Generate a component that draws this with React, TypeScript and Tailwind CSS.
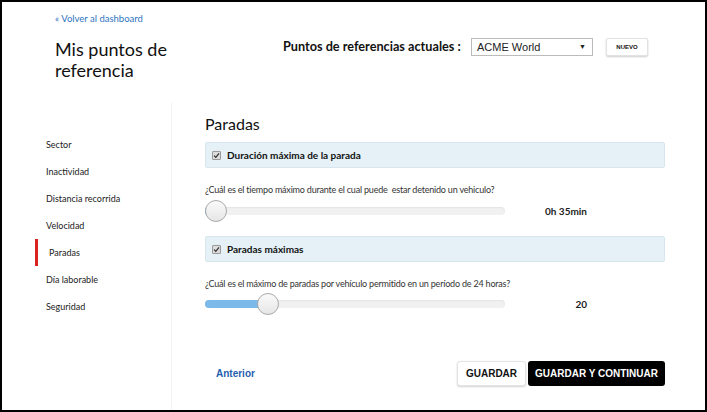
import { useState } from 'react';

const SECTIONS = ['Sector', 'Inactividad', 'Distancia recorrida', 'Velocidad', 'Paradas', 'Día laborable', 'Seguridad'];

function Check() {
  return (
    <span className="flex h-[9px] w-[9px] items-center justify-center rounded-[1px] border border-[#9a9a9a] bg-[#dcdcdc]">
      <svg viewBox="0 0 10 10" className="h-[7px] w-[7px]">
        <path d="M1.5 5.2 L4 7.6 L8.6 2" fill="none" stroke="#333" strokeWidth="1.8" />
      </svg>
    </span>
  );
}

function Slider({ pct, value }: { pct: number; value: string }) {
  return (
    <div className="flex h-[22px] items-center">
      <div className="relative h-[22px] w-[300px]">
        <div className="absolute left-0 right-0 top-[7px] h-[8px] rounded-[4px] bg-[#f1f1f1] shadow-[inset_0_1px_2px_rgba(0,0,0,0.06)]" />
        <div
          className="absolute left-0 top-[7px] h-[8px] rounded-l-[4px] bg-[#7db9e8]"
          style={{ width: `${Math.max(pct * 300, 3)}px` }}
        />
        <div
          className="absolute top-0 h-[22px] w-[22px] rounded-full border border-[#aaa] bg-gradient-to-b from-[#fafafa] to-[#e6e6e6]"
          style={{ left: `${pct * 300 - (pct > 0 ? 11 : 0)}px` }}
        />
      </div>
      <span className="w-[82px] text-right text-[10px] font-bold text-[#222]">{value}</span>
    </div>
  );
}

export default function App() {
  const [active] = useState('Paradas');

  return (
    <div className="flex h-[412px] w-[707px] flex-col overflow-hidden border-2 border-black bg-white font-['Lato',sans-serif] text-[#222]">
      {/* header */}
      <header className="flex h-[101px] shrink-0 pl-[53px] pt-[11px]">
        <div className="w-[228px]">
          <a className="block text-[9.5px] leading-[12px] text-[#2f74c0]">« Volver al dashboard</a>
          <h1 className="mt-[14px] text-[18px] leading-[21px] text-[#111]">
            Mis puntos de
            <br />
            referencia
          </h1>
        </div>
        <div className="mt-[25px] flex h-[18px] items-center">
          <span className="w-[179px] whitespace-nowrap text-[12.7px] font-bold text-[#111]">Puntos de referencias actuales :</span>
          <div className="ml-[9px] flex h-[18px] w-[122px] items-center justify-between border border-[#bbb] bg-white pl-[5px] pr-[6px] font-['Liberation_Sans',sans-serif] text-[11px] text-[#222]">
            <span>ACME World</span>
            <span className="text-[7px]">▼</span>
          </div>
          <button className="ml-[13px] h-[18px] w-[42px] rounded-[2px] border border-[#e2e2e2] bg-white font-['Liberation_Sans',sans-serif] text-[6px] font-bold text-[#111] shadow-[0_1px_2px_rgba(0,0,0,0.2)]">
            NUEVO
          </button>
        </div>
      </header>

      <div className="flex flex-1">
        {/* sidebar */}
        <nav className="w-[169px] shrink-0 pl-[33px] pt-[28px]">
          {SECTIONS.map((s) =>
            s === active ? (
              <div key={s} className="flex h-[27px] items-center border-l-[3px] border-[#d9231d] pl-[11px] text-[9px]">
                {s}
              </div>
            ) : (
              <div key={s} className="flex h-[27px] items-center pl-[11px] text-[9px]">
                {s}
              </div>
            ),
          )}
        </nav>

        {/* content */}
        <main className="flex flex-1 flex-col border-l border-[#f3f3f3] pl-[33px] pr-[40px] pt-[11px]">
          <h2 className="text-[16px] leading-[20px] text-[#111]">Paradas</h2>

          <div className="mt-[8px] flex h-[26px] items-center gap-[6px] rounded-[2px] border border-[#d7e6ee] bg-[#e5f1f7] pl-[6px]">
            <Check />
            <span className="text-[10px] font-bold text-[#111]">Duración máxima de la parada</span>
          </div>
          <p className="mt-[15px] text-[9px] leading-[14px] tracking-[-0.2px] text-[#333]">
            ¿Cuál es el tiempo máximo durante el cual puede&nbsp; estar detenido un vehiculo?
          </p>
          <div className="mt-[3px]">
            <Slider pct={0} value="0h 35min" />
          </div>

          <div className="mt-[14px] flex h-[26px] items-center gap-[6px] rounded-[2px] border border-[#d7e6ee] bg-[#e5f1f7] pl-[6px]">
            <Check />
            <span className="text-[10px] font-bold text-[#111]">Paradas máximas</span>
          </div>
          <p className="mt-[15px] text-[9px] leading-[14px] tracking-[-0.2px] text-[#333]">
            ¿Cuál es el máximo de paradas por vehículo permitido en un período de 24 horas?
          </p>
          <div className="mt-[2px]">
            <Slider pct={0.21} value="20" />
          </div>

          <div className="mt-[46px] flex items-center justify-between pl-[11px]">
            <a className="font-['Liberation_Sans',sans-serif] text-[10px] font-bold text-[#1f5fae]">Anterior</a>
            <div className="flex gap-[2px]">
              <button className="h-[25px] w-[69px] rounded-[3px] border border-[#e4e4e4] bg-white font-['Liberation_Sans',sans-serif] text-[10px] font-bold text-[#111] shadow-[0_1px_2px_rgba(0,0,0,0.18)]">
                GUARDAR
              </button>
              <button className="h-[25px] w-[137px] rounded-[3px] bg-black font-['Liberation_Sans',sans-serif] text-[10px] font-bold text-white">
                GUARDAR Y CONTINUAR
              </button>
            </div>
          </div>
        </main>
      </div>
    </div>
  );
}
